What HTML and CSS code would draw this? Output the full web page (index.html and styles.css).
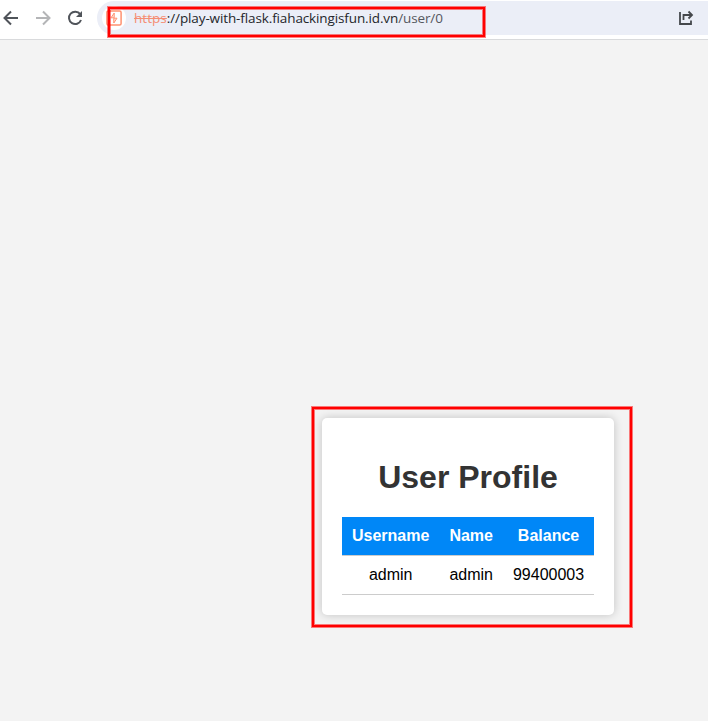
FILE: index.html
```html
<!DOCTYPE html>
<html lang="en">
<head>
<meta charset="utf-8">
<title>User Profile</title>
<link rel="stylesheet" href="styles.css">
</head>
<body>
<header class="toolbar">
  <nav class="nav">
    <svg width="16" height="16" viewBox="0 0 16 16" fill="none" stroke="#50545a" stroke-width="2"><path d="M15 8H2M8 1.5 1.5 8 8 14.5"/></svg>
    <svg width="16" height="16" viewBox="0 0 16 16" fill="none" stroke="#b4b5b7" stroke-width="2"><path d="M1 8h13M8 1.5 14.5 8 8 14.5"/></svg>
    <svg width="16" height="16" viewBox="0 0 16 16" fill="none" stroke="#50545a" stroke-width="2"><path d="M13.2 4.2A6.2 6.2 0 1 0 14 10"/><path d="M15 1v6H9z" fill="#50545a" stroke="none"/></svg>
  </nav>
  <div class="omnibox">
    <span class="site">
      <svg width="16" height="16" viewBox="0 0 16 16" fill="none" stroke="#ff9271" stroke-width="1.5"><rect x=".9" y=".9" width="14.2" height="14.2" rx="1.5"/><path d="M8.2 3 5 7.8h3.2zM7.8 8.2H11L7.8 13z" stroke-width="1" fill="#ff9271" fill-opacity=".25"/></svg>
    </span>
    <span class="url"><s>https</s>://play-with-flask.fiahackingisfun.id.vn<span class="path">/user/0</span></span>
    <svg class="share" width="16" height="16" viewBox="0 0 16 16" fill="none" stroke="#45484c" stroke-width="1.8"><path d="M2 2v12h11v-3.5M5.5 10V5H13M10.5 1.5 14 5l-3.5 3.5"/></svg>
  </div>
</header>
<main class="page">
  <section class="card">
    <h1>User Profile</h1>
    <table>
      <thead><tr><th>Username</th><th>Name</th><th>Balance</th></tr></thead>
      <tbody><tr><td>admin</td><td>admin</td><td>99400003</td></tr></tbody>
    </table>
  </section>
</main>
<div class="mark mark-url"></div>
<div class="mark mark-card"></div>
</body>
</html>
```
FILE: styles.css
```css
* { box-sizing: border-box; }
body {
  margin: 0;
  height: 721px;
  overflow: hidden;
  position: relative;
  background: #f3f3f3;
  font-family: "Liberation Sans", Arial, sans-serif;
}
svg { display: block; flex: none; }
.toolbar {
  display: flex;
  height: 40px;
  padding-top: 1px;
  background: #fff;
  border-bottom: 1px solid #d9dadc;
}
.nav {
  display: flex;
  align-items: center;
  gap: 16px;
  width: 97px;
  height: 34px;
  padding-left: 3px;
}
.omnibox {
  display: flex;
  flex: 1;
  align-items: center;
  height: 34px;
  padding: 0 14px 0 5px;
  background: #ebeef7;
  border-radius: 17px 0 0 17px;
}
.site {
  display: flex;
  align-items: center;
  justify-content: center;
  width: 24px;
  height: 24px;
  border-radius: 50%;
  background: #fff;
}
.url {
  margin-left: 8px;
  font: 13.5px/18px "Open Sans", "Noto Sans", sans-serif;
  letter-spacing: -0.12px;
  color: #24262a;
  white-space: nowrap;
}
.url s { letter-spacing: 0.05px; color: #f58d74; }
.path { color: #55585e; }
.share { margin-left: auto; }
.page { padding: 378px 0 0 322px; }
.card {
  width: 292px;
  height: 197px;
  padding: 20px;
  background: #fff;
  border-radius: 5px;
  box-shadow: 0 0 10px rgba(0, 0, 0, .2);
}
h1 {
  margin: 21px 0;
  font-size: 32px;
  line-height: 37px;
  text-align: center;
  color: #333;
}
table {
  width: 100%;
  border-collapse: separate;
  border-spacing: 0;
  font-size: 16px;
  line-height: 18px;
  text-align: center;
}
th, td { padding: 10px; border-bottom: 1px solid #ccc; }
th { background: #0087f7; color: #fff; }
.mark {
  position: absolute;
  border: 2px solid #f00;
  box-shadow: 0 0 0 1px rgba(255, 0, 0, .5), inset 0 0 0 1px rgba(255, 0, 0, .5);
}
.mark-url { left: 108px; top: 7px; width: 377px; height: 30px; }
.mark-card { left: 312px; top: 407px; width: 320px; height: 220px; }
```
